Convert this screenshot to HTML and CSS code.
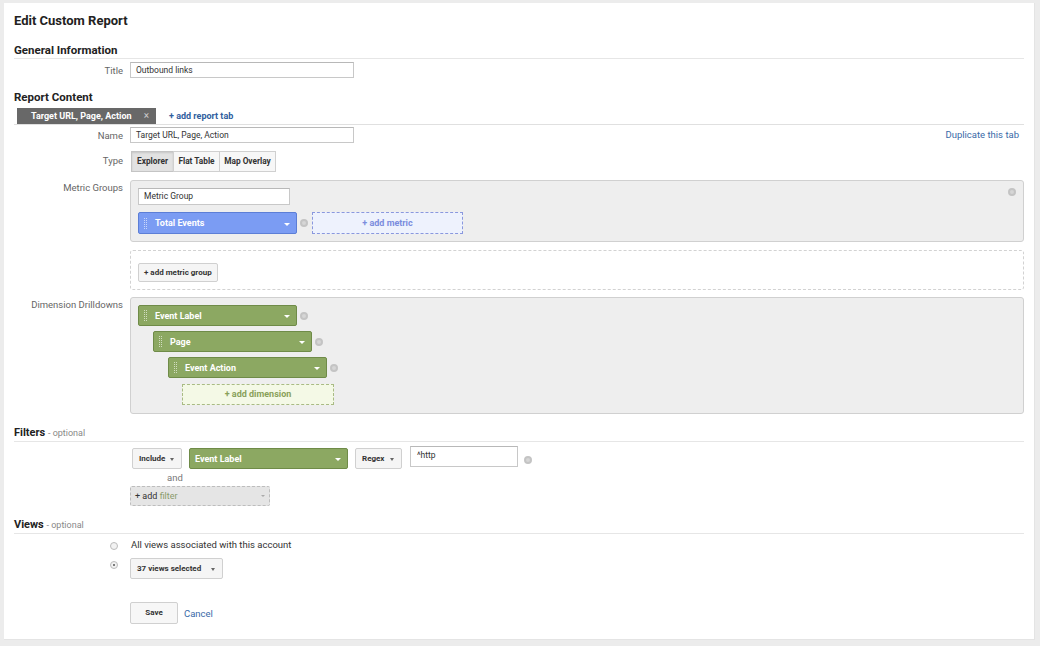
FILE: index.html
```html
<!DOCTYPE html>
<html>
<head>
<meta charset="utf-8">
<link rel="stylesheet" href="styles.css">
</head>
<body>
<div class="panel">
  <h1 class="title">Edit Custom Report</h1>

  <h2 class="sec line">General Information</h2>
  <div class="row r-title">
    <div class="lbl">Title</div>
    <div class="input w224">Outbound links</div>
  </div>

  <h2 class="sec rc">Report Content</h2>
  <div class="tabbar">
    <span class="tab">Target URL, Page, Action<span class="tabx">×</span></span>
    <a class="addtab">+ add report tab</a>
  </div>

  <div class="row r-name">
    <div class="lbl">Name</div>
    <div class="input w224">Target URL, Page, Action</div>
    <a class="dup">Duplicate this tab</a>
  </div>

  <div class="row r-type">
    <div class="lbl lbl-top">Type</div>
    <div class="seg">
      <span class="segbtn on s1">Explorer</span><span class="segbtn s2">Flat Table</span><span class="segbtn s3">Map Overlay</span>
    </div>
  </div>

  <div class="row r-metric">
    <div class="lbl lbl-top">Metric Groups</div>
    <div class="box metricbox">
      <div class="input w152">Metric Group</div>
      <div class="chiprow">
        <span class="chip blue"><span class="grip"></span><span class="chiptext">Total Events</span><span class="caret"></span></span>
        <span class="rm"></span>
        <span class="addmetric">+ add metric</span>
      </div>
      <span class="rm boxrm"></span>
    </div>
  </div>

  <div class="row r-addgroup">
    <div class="lbl"></div>
    <div class="dashbox">
      <span class="btn small">+ add metric group</span>
    </div>
  </div>

  <div class="row r-dim">
    <div class="lbl lbl-top">Dimension Drilldowns</div>
    <div class="box dimbox">
      <div class="chiprow"><span class="chip green"><span class="grip"></span><span class="chiptext">Event Label</span><span class="caret"></span></span><span class="rm"></span></div>
      <div class="chiprow in1"><span class="chip green"><span class="grip"></span><span class="chiptext">Page</span><span class="caret"></span></span><span class="rm"></span></div>
      <div class="chiprow in2"><span class="chip green"><span class="grip"></span><span class="chiptext">Event Action</span><span class="caret"></span></span><span class="rm"></span></div>
      <div class="chiprow in3"><span class="adddim">+ add dimension</span></div>
    </div>
  </div>

  <h2 class="sec line small-sec">Filters <span class="opt">- optional</span></h2>
  <div class="row r-filter">
    <div class="lbl"></div>
    <div class="filterline">
      <span class="btn drop w50">Include<span class="dcaret"></span></span>
      <span class="chip green fchip"><span class="chiptext">Event Label</span><span class="caret"></span></span>
      <span class="btn drop w47">Regex<span class="dcaret"></span></span>
      <div class="input regex">^http</div>
      <span class="rm"></span>
    </div>
  </div>
  <div class="row r-and">
    <div class="lbl"></div>
    <div class="and">and</div>
  </div>
  <div class="row r-addfilter">
    <div class="lbl"></div>
    <div class="addfilter">+ add <span class="fword">filter</span><span class="fcaret"></span></div>
  </div>

  <h2 class="sec line small-sec views">Views <span class="opt">- optional</span></h2>
  <div class="row r-radio1">
    <div class="lbl"><span class="radio"></span></div>
    <div class="rtext">All views associated with this account</div>
  </div>
  <div class="row r-radio2">
    <div class="lbl"><span class="radio checked"></span></div>
    <span class="btn drop w93">37 views selected<span class="dcaret"></span></span>
  </div>

  <div class="row r-save">
    <div class="lbl"></div>
    <span class="btn save">Save</span>
    <a class="cancel">Cancel</a>
  </div>
</div>
</body>
</html>
```

FILE: styles.css
```css
* { box-sizing: border-box; }
html, body { margin: 0; padding: 0; }
body {
  background: #ececec;
  font-family: Roboto, "Liberation Sans", Arial, sans-serif;
  color: #333;
  width: 1040px;
  height: 646px;
  overflow: hidden;
}
.panel {
  background: #fff;
  margin: 3px 5px 0 4px;
  height: 637px;
  padding: 9px 10px 0 10px;
  border-right: 1px solid #e4e4e4;
  border-bottom: 1px solid #e4e4e4;
}
.title {
  margin: 0;
  font-size: 13px;
  line-height: 18px;
  font-weight: 700;
  color: #222;
}
.sec {
  margin: 12px 0 0 0;
  font-size: 11.5px;
  line-height: 16px;
  font-weight: 700;
  color: #222;
}
.sec.line { border-bottom: 1px solid #e6e6e6; }
.sec.rc { margin-top: 11px; }
.small-sec { font-size: 11px; margin-top: 11px; }
.opt { font-size: 9px; font-weight: 400; color: #888; }

.row { display: flex; align-items: center; }
.lbl {
  width: 109px;
  margin-right: 7px;
  flex: none;
  text-align: right;
  font-size: 9.5px;
  color: #666;
}
.lbl-top { align-self: flex-start; }

.input {
  height: 16px;
  border: 1px solid #c8c8c8;
  border-top-color: #b8b8b8;
  background: #fff;
  font-size: 8.5px;
  line-height: 14px;
  padding: 0 5px;
  color: #333;
}
.w224 { width: 224px; }
.w152 { width: 152px; height: 17px; line-height: 15px; }

.r-title { margin-top: 3px; }

.tabbar {
  margin-top: 3px;
  height: 17px;
  border-bottom: 1px solid #e0e0e0;
  display: flex;
  align-items: flex-end;
  padding-left: 3px;
}
.tab {
  height: 16px;
  width: 139px;
  background: #686868;
  color: #fff;
  font-size: 9px;
  font-weight: 700;
  line-height: 16px;
  padding-left: 14px;
  position: relative;
}
.tabx {
  position: absolute;
  right: 7px;
  top: 0;
  font-weight: 400;
  color: #ccc;
  font-size: 10px;
}
.addtab {
  margin-left: 13px;
  font-size: 9px;
  font-weight: 700;
  color: #2f5e9e;
  line-height: 16px;
}

.r-name { margin-top: 2px; }
.dup {
  margin-left: auto;
  margin-right: 5px;
  font-size: 9.5px;
  color: #3a6aa8;
  position: relative;
  top: -1px;
}

.r-type { margin-top: 8px; }
.r-type .lbl { padding-top: 4px; }
.seg { display: flex; }
.segbtn {
  height: 21px;
  border: 1px solid #d0d0d0;
  background: #f7f7f7;
  font-size: 8.3px;
  font-weight: 700;
  color: #333;
  line-height: 19px;
  text-align: center;
  margin-left: -1px;
}
.s1 { width: 43px; margin-left: 1px; }
.s2 { width: 47px; }
.s3 { width: 57px; }
.segbtn.on {
  background: #e2e2e2;
  border-color: #c4c4c4;
  box-shadow: inset 0 1px 2px rgba(0,0,0,0.12);
}

.box {
  flex: 1;
  background: #eeeeee;
  border: 1px solid #d0d0d0;
  border-radius: 3px;
  position: relative;
}
.r-metric { margin-top: 8px; }
.r-metric .lbl, .r-dim .lbl { padding-top: 2px; }
.metricbox { height: 62px; padding: 7px 7px; }
.chiprow { display: flex; align-items: center; margin-top: 7px; }
.chip {
  width: 159px;
  height: 22px;
  border-radius: 2px;
  color: #fff;
  font-size: 9px;
  font-weight: 700;
  display: flex;
  align-items: center;
  position: relative;
}
.chip.blue { background: #7b9cf3; border: 1px solid #5c7ed6; }
.chip.green { background: #8ca862; border: 1px solid #6f8b48; }
.grip {
  width: 3px;
  height: 11px;
  margin-left: 5px;
  border-left: 1px dotted rgba(255,255,255,0.6);
  border-right: 1px dotted rgba(255,255,255,0.6);
}
.chiptext { margin-left: 8px; }
.caret {
  position: absolute;
  right: 6px;
  top: 10px;
  border-left: 3px solid transparent;
  border-right: 3px solid transparent;
  border-top: 3px solid #fff;
}
.rm {
  width: 8px;
  height: 8px;
  border-radius: 50%;
  background: #d6d6d6;
  border: 2px solid #c4c4c4;
  margin-left: 3px;
  flex: none;
}
.boxrm { position: absolute; right: 7px; top: 7px; }
.addmetric {
  margin-left: 4px;
  width: 151px;
  height: 22px;
  border: 1px dashed #8a98de;
  background: #eef2fd;
  color: #7b8ddd;
  font-size: 9px;
  font-weight: 700;
  line-height: 20px;
  text-align: center;
}

.r-addgroup { margin-top: 8px; }
.dashbox {
  flex: 1;
  height: 40px;
  border: 1px dashed #d2d2d2;
  border-radius: 3px;
  padding: 9px 7px;
}
.btn {
  display: inline-block;
  height: 21px;
  border: 1px solid #d0d0d0;
  background: #f5f5f5;
  border-radius: 2px;
  font-size: 8px;
  font-weight: 700;
  color: #333;
  line-height: 19px;
  padding: 0 6px;
  position: relative;
}
.btn.small { height: 19px; line-height: 17px; padding: 0 5px; font-size: 8px; }

.r-dim { margin-top: 7px; }
.dimbox { height: 117px; padding: 0 7px; }
.dimbox .chiprow { margin-top: 5px; }
.dimbox .chiprow:first-child { margin-top: 7px; }
.dimbox .chip { height: 21px; }
.dimbox .caret { top: 9px; }
.in1 { padding-left: 15px; }
.in2 { padding-left: 30px; }
.in3 { padding-left: 44px; margin-top: 6px !important; }
.adddim {
  width: 152px;
  height: 21px;
  border: 1px dashed #a9bb84;
  background: #f4f9e6;
  color: #89a15a;
  font-size: 9px;
  font-weight: 700;
  line-height: 19px;
  text-align: center;
}

.r-filter { margin-top: 4px; align-items: flex-start; }
.filterline { display: flex; align-items: flex-start; }
.drop { padding-right: 16px; }
.w50 { margin-left: 2px; margin-top: 2px; width: 50px; }
.w47 { margin-left: 7px; margin-top: 2px; width: 47px; }
.dcaret {
  position: absolute;
  right: 7px;
  top: 9px;
  border-left: 2.5px solid transparent;
  border-right: 2.5px solid transparent;
  border-top: 3px solid #666;
}
.fchip { margin-left: 7px; margin-top: 2px; width: 159px; height: 21px; }
.fchip .chiptext { margin-left: 5px; }
.fchip .caret { top: 9px; }
.regex { margin-left: 8px; width: 108px; height: 21px; line-height: 17px; padding-left: 6px; }
.filterline .rm { margin-left: 6px; margin-top: 10px; }

.r-and { margin-top: 3px; }
.and { font-size: 9.5px; color: #777; line-height: 12px; margin-left: 37px; }
.r-addfilter { margin-top: 2px; }
.addfilter {
  width: 140px;
  height: 20px;
  background: #e5e5e5;
  border: 1px dashed #bdbdbd;
  border-radius: 2px;
  font-size: 9px;
  line-height: 18px;
  padding-left: 4px;
  color: #333;
  position: relative;
}
.fword { color: #8a9a6a; }
.fcaret {
  position: absolute;
  right: 4px;
  top: 8px;
  border-left: 2px solid transparent;
  border-right: 2px solid transparent;
  border-top: 2px solid #aaa;
}

.views { margin-top: 11px; }
.r-radio1 { margin-top: 5px; }
.lbl .radio { margin-right: 5px; }
.radio {
  display: inline-block;
  width: 8px;
  height: 8px;
  border-radius: 50%;
  border: 1px solid #bbb;
  background: #f2f2f2;
  vertical-align: middle;
  position: relative;
}
.radio.checked::after {
  content: "";
  position: absolute;
  left: 2px; top: 2px;
  width: 2px; height: 2px;
  border-radius: 50%;
  background: #555;
}
.rtext { font-size: 9.5px; color: #333; line-height: 12px; margin-left: 1px; }
.r-radio2 { margin-top: 7px; }
.r-radio2 .lbl { position: relative; top: -4px; }
.w93 { width: 93px; font-size: 8px; }

.r-save { margin-top: 23px; }
.save { width: 48px; height: 22px; text-align: center; padding: 0; line-height: 20px; background: #f7f7f7; }
.cancel { margin-left: 6px; font-size: 9.5px; color: #3a6aa8; }
```
